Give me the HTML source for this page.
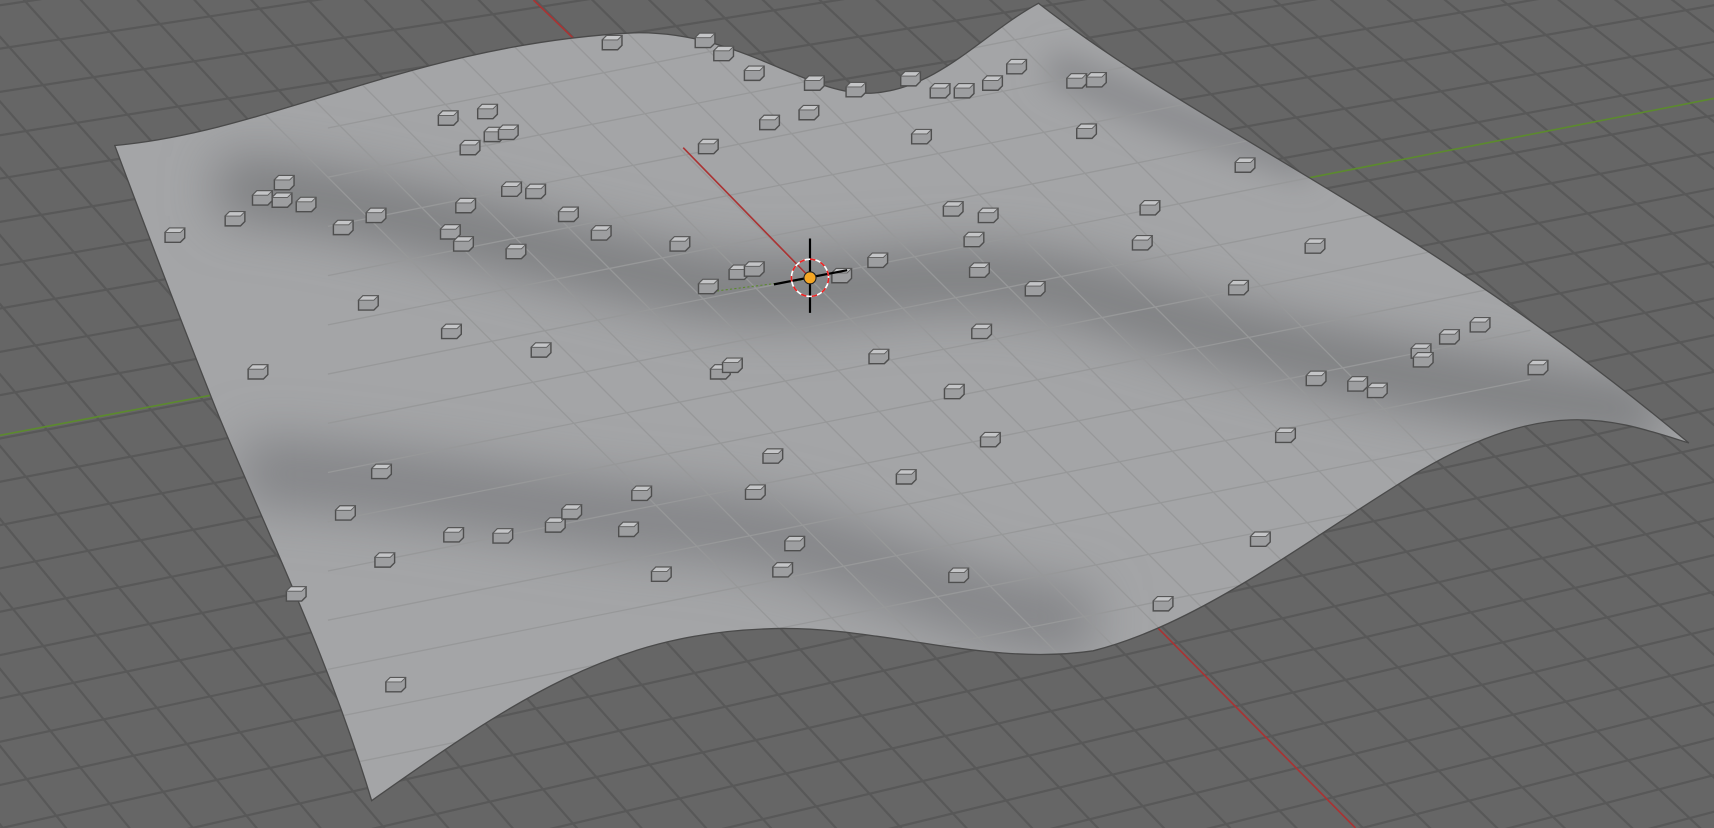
<!DOCTYPE html>
<html><head><meta charset="utf-8"><style>
html,body{margin:0;padding:0;background:#666;overflow:hidden;width:1714px;height:828px}
svg{display:block}
</style></head><body>
<svg id="s" width="1714" height="828" viewBox="0 0 1568 757" preserveAspectRatio="none" xmlns="http://www.w3.org/2000/svg">
<defs>
<filter id="b" filterUnits="userSpaceOnUse" x="-200" y="-200" width="2000" height="1200"><feGaussianBlur stdDeviation="24"/></filter>
<filter id="b2" filterUnits="userSpaceOnUse" x="-200" y="-200" width="2000" height="1200"><feGaussianBlur stdDeviation="14"/></filter>
<clipPath id="surf"><path id="sp" d="M105,133 C250,120 380,40 580,30 C680,28 740,90 800,85 C860,80 900,30 950,3 C1100,120 1300,200 1545,405 C1480,385 1420,360 1300,430 C1200,490 1100,570 1000,595 C900,610 800,570 700,575 C560,580 470,640 340,732 C300,600 250,500 200,380 C160,280 130,200 105,133 Z"/></clipPath>
</defs>
<rect width="1568" height="757" fill="#666"/>
<g id="grid" stroke="#585858" stroke-width="2"></g>
<line x1="0" y1="398" x2="200" y2="360" stroke="#5c8a2e" stroke-width="1.5"/>
<line x1="1180" y1="166" x2="1568" y2="90" stroke="#5c8a2e" stroke-width="1.5"/>
<line x1="488" y1="0" x2="535" y2="45" stroke="#a33" stroke-width="1.5"/>
<line x1="905" y1="418" x2="1240" y2="757" stroke="#a33" stroke-width="1.5"/>
<use href="#sp" fill="#a4a5a7"/>
<g clip-path="url(#surf)">
 <path d="M200,170 C330,180 450,220 640,260 C780,280 860,230 1000,270 C1150,320 1300,350 1520,380" stroke="#7a7b7e" stroke-width="55" fill="none" filter="url(#b)"/>
 <path d="M220,430 C400,440 500,470 650,480 C800,500 860,560 1000,570" stroke="#828386" stroke-width="60" fill="none" filter="url(#b)"/>
 <path d="M960,60 C1030,90 1100,120 1200,150" stroke="#88898c" stroke-width="30" fill="none" filter="url(#b2)"/>
 <g id="sg" stroke="#979899" stroke-width="1.2"></g>
 <line x1="625" y1="135" x2="742" y2="255" stroke="#a33" stroke-width="1.5"/>
 <line x1="640" y1="268" x2="742" y2="255" stroke="#5c8a2e" stroke-width="1" stroke-dasharray="2,2"/>
</g>
<use href="#sp" fill="none" stroke="#4a4a4a" stroke-width="1.2"/>
<g id="cubes"></g>
<g>
 <line x1="741" y1="218" x2="741" y2="286" stroke="#000" stroke-width="2"/>
 <line x1="708" y1="260" x2="775" y2="247" stroke="#000" stroke-width="2"/>
 <circle cx="741" cy="254" r="17" fill="none" stroke="#fff" stroke-width="1.5"/>
 <circle cx="741" cy="254" r="17" fill="none" stroke="#e22" stroke-width="1.5" stroke-dasharray="5,5"/>
 <circle cx="741" cy="254" r="5.5" fill="#f5a623" stroke="#222" stroke-width="1"/>
</g>
</svg>
<script>
var NS="http://www.w3.org/2000/svg";
function L(g,x1,y1,x2,y2){var l=document.createElementNS(NS,"line");l.setAttribute("x1",x1);l.setAttribute("y1",y1);l.setAttribute("x2",x2);l.setAttribute("y2",y2);g.appendChild(l);}
var g=document.getElementById("grid");
for(var i=-40;i<60;i++){var x0=490+i*52;var sl=1.0-i*0.012;L(g,x0-800,-800*sl,x0+1600,1600*sl);}
for(var j=-30;j<40;j++){var y0=380+j*40;var s=-0.19-j*0.004;L(g,-50,y0-50*s*-1,1700,y0+1750*s);}
var sg=document.getElementById("sg");
for(var i=-6;i<8;i++){var x0=740+i*58;L(sg,x0-300,254-300,x0+600,254+600);}
for(var j=-6;j<9;j++){var y0=254+j*45;L(sg,300,y0+440*0.2,1400,y0-660*0.2);}
var c=[[560,40],[645,38],[662,50],[690,68],[745,77],[783,83],[833,73],[860,84],[882,84],[908,77],[930,62],[985,75],[1003,74],[410,109],[446,103],[430,136],[452,124],[465,122],[648,135],[704,113],[740,104],[843,126],[994,121],[1139,152],[260,168],[240,182],[258,184],[280,188],[215,201],[160,216],[314,209],[344,198],[426,189],[468,174],[490,176],[520,197],[550,214],[412,213],[424,224],[472,231],[622,224],[872,192],[904,198],[891,220],[1052,191],[1045,223],[1203,226],[676,250],[690,247],[648,263],[770,253],[803,239],[896,248],[947,265],[1133,264],[337,278],[413,304],[495,321],[236,341],[659,341],[670,335],[804,327],[898,304],[873,359],[1300,322],[1302,330],[1326,309],[1354,298],[1407,337],[1204,347],[1242,352],[1260,358],[906,403],[1176,399],[707,418],[349,432],[829,437],[691,451],[587,452],[316,470],[415,490],[460,491],[508,481],[523,469],[575,485],[727,498],[716,522],[605,526],[352,513],[877,527],[1153,494],[1064,553],[271,544],[362,627]];
var cg=document.getElementById("cubes");
c.forEach(function(p){var x=p[0],y=p[1];var w=18,h=13;
var r=document.createElementNS(NS,"path");
r.setAttribute("d","M"+(x-w/2)+","+(y-h/2+3)+" l4,-4 h"+(w-4)+" v"+(h-4)+" l-4,4 h"+(-(w-4))+" z");
r.setAttribute("fill","#9d9ea0");r.setAttribute("stroke","#4f4f4f");r.setAttribute("stroke-width","1.3");cg.appendChild(r);
var t=document.createElementNS(NS,"path");
t.setAttribute("d","M"+(x-w/2)+","+(y-h/2+3)+" l4,-4 h"+(w-4)+" l-4,4 z");
t.setAttribute("fill","#c4c5c7");t.setAttribute("stroke","#5a5a5a");t.setAttribute("stroke-width","0.8");cg.appendChild(t);});
</script>
</body></html>
